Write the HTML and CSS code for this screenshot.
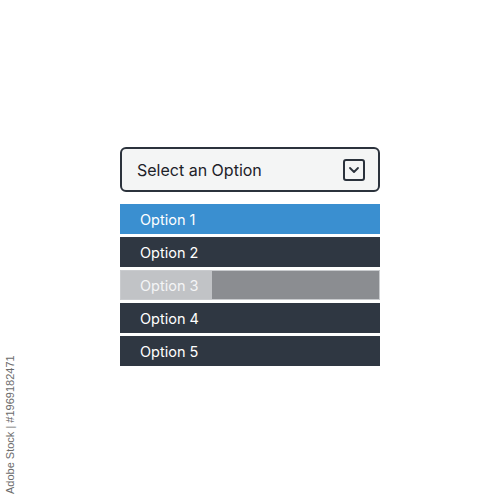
FILE: index.html
```html
<!DOCTYPE html>
<html lang="en">
<head>
  <meta charset="UTF-8" />
  <title>Dropdown</title>
  <link rel="stylesheet" href="styles.css">
</head>
<body>
  <div class="dropdown">
    <div class="select">
      <span>Select an Option</span>
      <span class="caret">
        <svg width="12" height="8" viewBox="0 0 12 8"><path d="M2 2 L6 6 L10 2" fill="none" stroke="#2b323c" stroke-width="1.8" stroke-linecap="round" stroke-linejoin="round"/></svg>
      </span>
    </div>

    <ul class="options">
      <li class="option active">Option 1</li>
      <li class="option">Option 2</li>
      <li class="option disabled"><span class="label">Option 3</span></li>
      <li class="option">Option 4</li>
      <li class="option">Option 5</li>
    </ul>
  </div>

  <div class="stock-id">Adobe Stock | #1969182471</div>
</body>
</html>
```

FILE: styles.css
```css
body {
  margin: 0;
  width: 500px;
  height: 500px;
  background-color: #ffffff;
  font-family: 'Inter', 'Roboto', sans-serif;
  position: relative;
  overflow: hidden;
}
.dropdown {
  width: 260px;
  padding: 147px 0 0 120px;
}
.select {
  box-sizing: border-box;
  height: 45px;
  border: 2px solid #2b323c;
  border-radius: 6px;
  background-color: #f4f5f5;
  display: flex;
  align-items: center;
  justify-content: space-between;
  padding: 0 13px 0 15px;
  font-size: 16px;
  color: #1d2229;
}
.caret {
  box-sizing: border-box;
  width: 22px;
  height: 22px;
  border: 2px solid #2b323c;
  border-radius: 3px;
  display: flex;
  align-items: center;
  justify-content: center;
}
.options {
  list-style: none;
  margin: 12px 0 0;
  padding: 0;
  display: flex;
  flex-direction: column;
  gap: 3px;
}
.option {
  height: 30px;
  display: flex;
  align-items: center;
  padding-left: 20px;
  background-color: #2f3742;
  color: #ffffff;
  font-size: 14.5px;
}
.option.active {
  background-color: #3a8fd0;
}
.option.disabled {
  box-sizing: border-box;
  padding-left: 0;
  align-items: stretch;
  background-color: #8b8d91;
  border: 1px solid #c9cbce;
}
.option.disabled .label {
  width: 91px;
  display: flex;
  align-items: center;
  padding-left: 19px;
  box-sizing: border-box;
  background-color: #c1c3c6;
  color: #f4f5f6;
}
.stock-id {
  position: absolute;
  left: 4px;
  top: 494px;
  transform: rotate(-90deg);
  transform-origin: left top;
  font-family: 'Liberation Sans', sans-serif;
  font-size: 11px;
  color: #6b6b6b;
  white-space: nowrap;
}
```
